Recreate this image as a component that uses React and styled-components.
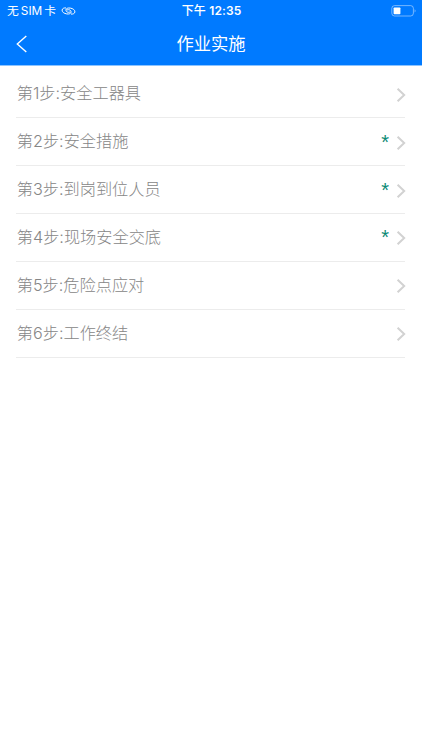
import styled, { createGlobalStyle } from 'styled-components'

const steps = [
  { label: '第1步:安全工器具' },
  { label: '第2步:安全措施', required: true },
  { label: '第3步:到岗到位人员', required: true },
  { label: '第4步:现场安全交底', required: true },
  { label: '第5步:危险点应对' },
  { label: '第6步:工作终结' },
]

const App = () => {
  return (
    <Page>
      <GlobalStyle />
      <Header>
        <StatusBar>
          <Carrier>
            <span>无</span>
            <span>SIM</span>
            <span>卡</span>
            <LinkIcon />
          </Carrier>
          <Clock>下午 <b>12:35</b></Clock>
          <Battery />
        </StatusBar>
        <NavBar>
          <BackButton aria-label="返回">
            <svg width="12" height="18" viewBox="0 0 12 18" fill="none" stroke="#fff" strokeWidth="1.4">
              <path d="M10.3 0.9 L1.3 9 L10.3 17.1" />
            </svg>
          </BackButton>
          <Title>作业实施</Title>
        </NavBar>
      </Header>
      <List>
        {steps.map(step => (
          <Step key={step.label}>
            <Label>{step.label}</Label>
            {step.required && <Required>*</Required>}
            <Arrow width="10" height="16" viewBox="0 0 10 16">
              <path d="M1.6 1.7 L8.2 8 L1.6 14.3" />
            </Arrow>
          </Step>
        ))}
      </List>
    </Page>
  )
}

// two interlocked rings, the hotspot / link indicator
const LinkIcon = () => (
  <LinkSvg width="15" height="10" viewBox="0 0 15 10">
    <path d="M8.6 6.2 C7 6.8 4.9 5.8 4.9 4.1 C4.9 2.4 7 1.7 9.3 2.1 C12 2.5 14 4 13.9 5.9 C13.8 7.5 12 8.3 10.4 8.1" />
    <path d="M6.4 3.8 C8 3.2 10.1 4.2 10.1 5.9 C10.1 7.6 8 8.3 5.7 7.9 C3 7.5 1 6 1.1 4.1 C1.2 2.5 3 1.7 4.6 1.9" />
  </LinkSvg>
)

const Battery = () => (
  <svg width="25" height="12" viewBox="0 0 25 12">
    <rect x="0.8" y="0.6" width="21.6" height="10.4" rx="2.8" fill="none" stroke="#fff" strokeOpacity="0.45" />
    <rect x="2.6" y="2.4" width="6.8" height="6.8" rx="0.8" fill="#fff" />
    <path d="M23.6 4.2 C24.9 4.7 24.9 6.9 23.6 7.4 Z" fill="#fff" fillOpacity="0.5" />
  </svg>
)

const GlobalStyle = createGlobalStyle`
  * { box-sizing: border-box; }

  body {
    margin: 0;
    background: #fff;
    font-family: Inter, "Noto Sans CJK SC", sans-serif;
  }
`

const Page = styled.div`
  min-height: 100vh;
  background: #fff;
`

const Header = styled.header`
  height: 65px;
  color: #fff;
  background: #007aff;
  box-shadow: 0 1px 0 #8cc4ff;
`

const StatusBar = styled.div`
  display: grid;
  grid-template-columns: 1fr auto 1fr;
  align-items: center;
  height: 22px;
  padding: 0 6px 0 7px;
  font-size: 12px;
  line-height: 22px;

  > :last-child { justify-self: end; }
`

const Carrier = styled.div`
  display: flex;
  align-items: center;
  gap: 2px;
  font-size: 11.8px;
`

const LinkSvg = styled.svg`
  margin-left: 3px;
  fill: none;
  stroke: #fff;
  stroke-width: 1;
  stroke-linecap: round;
`

const Clock = styled.div`
  font-weight: 500;
  letter-spacing: 0.1px;

  b { font-weight: 600; }
`

const NavBar = styled.div`
  display: grid;
  grid-template-columns: 48px 1fr 48px;
  align-items: center;
  height: 43px;
`

const BackButton = styled.button`
  display: flex;
  padding: 0 0 0 16px;
  border: 0;
  background: none;
`

const Title = styled.h1`
  margin: 0;
  padding-bottom: 1px;
  font-size: 17.3px;
  font-weight: 400;
  line-height: 41px;
  text-align: center;
`

const List = styled.ul`
  margin: 0;
  padding: 5.4px 17px 0 16px;
  list-style: none;
`

const Step = styled.li`
  display: flex;
  align-items: center;
  height: 47.87px;
  border-bottom: 1px solid #ececec;
`

const Label = styled.span`
  flex: 1;
  padding: 0 0 1px 0.8px;
  color: #868686;
  font-size: 16.2px;
  font-weight: 300;
  line-height: 46px;
`

const Required = styled.span`
  margin-right: 7px;
  color: #0b8a75;
  font-family: "Liberation Sans", sans-serif;
  font-size: 20px;
  line-height: 40px;
`

const Arrow = styled.svg`
  margin: 2px -1px 0 0;
  fill: none;
  stroke: #d2d2d2;
  stroke-width: 2;
`

export default App
